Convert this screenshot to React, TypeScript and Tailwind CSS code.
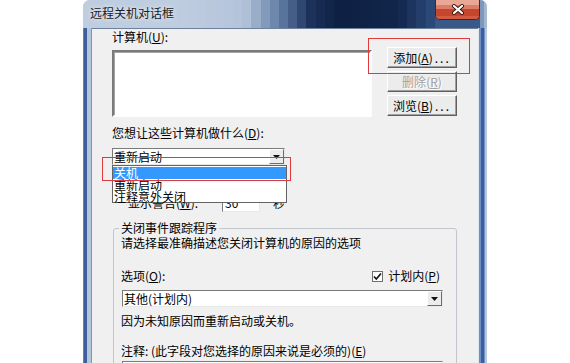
import React from 'react';

const Acc: React.FC<{ k: string }> = ({ k }) => (
  <span>
    (<span className="underline underline-offset-1">{k}</span>)
  </span>
);

const Arrow = () => (
  <div className="w-[15px] h-full flex items-center justify-center bg-[#ececec] border border-t-white border-l-white border-b-[#6d6d6d] border-r-[#6d6d6d]">
    <svg width="7" height="4" viewBox="0 0 7 4">
      <path d="M0 0h7L3.5 4z" fill="#111" />
    </svg>
  </div>
);

const Btn: React.FC<{ children: React.ReactNode; disabled?: boolean }> = ({ children, disabled }) => (
  <div
    className={
      'h-[21px] w-[70px] flex items-center justify-center bg-[#ececec] border border-t-white border-l-white border-b-[#5f5f5f] border-r-[#5f5f5f] shadow-[inset_-1px_-1px_0_#a0a0a0] ' +
      (disabled ? 'text-[#a2a2a2] [text-shadow:1px_1px_0_#ffffff]' : 'text-black')
    }
  >
    {children}
  </div>
);

// glass shading of the title bar, light on the left, deep navy towards the close button
const glass = [
  'bg-[#becce0]',
  'bg-[#bdcbdf]',
  'bg-[#bbcadf]',
  'bg-[#b9c8dd]',
  'bg-[#b8c7dd]',
  'bg-[#b6c6dc]',
  'bg-[#b4c5db]',
  'bg-[#aebfd6]',
  'bg-[#99adc9]',
  'bg-[#839bbb]',
  'bg-[#6d87ad]',
  'bg-[#58739c]',
  'bg-[#455e87]',
  'bg-[#304871]',
  'bg-[#1c325a]',
  'bg-[#172b52]',
  'bg-[#12254a]',
  'bg-[#0e2044]',
  'bg-[#0e2145]',
  'bg-[#0f2246]',
  'bg-[#0f2347]',
  'bg-[#102448]',
  'bg-[#10254a]',
  'bg-[#11254b]',
  'bg-[#142a52]',
  'bg-[#1c345e]',
  'bg-[#233e6b]',
  'bg-[#2b4978]',
];

const CloseBtn = () => (
  <div className="w-[45px] h-[20px] rounded-b-[5px] border border-t-0 border-[#5a1d17] bg-[#cf5a44] flex flex-col overflow-hidden relative">
    <div className="h-[5px] bg-[#eaa796]" />
    <div className="h-[4px] bg-[#dc7d69]" />
    <div className="flex-1 bg-[#c6452d]" />
    <div className="h-[3px] bg-[#d15a40]" />
    <svg className="absolute left-[15px] top-[4px]" width="14" height="11" viewBox="0 0 14 11">
      <path d="M3 2l8 7M11 2l-8 7" stroke="#3b1510" strokeWidth="4" strokeLinecap="round" />
      <path d="M3 2l8 7M11 2l-8 7" stroke="#ffffff" strokeWidth="2.2" strokeLinecap="round" />
    </svg>
  </div>
);

export default function App() {
  return (
    <div className="w-[570px] h-[363px] overflow-hidden bg-white flex font-['Noto_Sans_CJK_SC','Noto_Sans',sans-serif]">
      <div className="ml-[83px] w-[404px] h-[363px] flex flex-col rounded-t-[7px] overflow-hidden bg-[#b4c6dc]">
        {/* title bar */}
        <div className="h-[28px] shrink-0 flex items-stretch bg-[#bfcde0]">
          <div className="pl-[7px] pr-[4px] h-[26px] flex items-center text-[12px] text-[#1b1b1b] [text-shadow:0_0_5px_#ffffff]">
            远程关机对话框
          </div>
          <div className="flex-1 flex">
            {glass.map((c, i) => (
              <div key={i} className={'flex-1 ' + c} />
            ))}
          </div>
          <div className="w-[45px] bg-[#3a5887]">
            <CloseBtn />
          </div>
          <div className="w-[7px] flex">
            <div className="flex-1 bg-[#7d97bd]" />
            <div className="flex-1 bg-[#a4b8d2]" />
          </div>
        </div>

        <div className="flex flex-1 min-h-0">
          {/* left frame */}
          <div className="w-[9px] flex">
            <div className="w-[1px] bg-[#6a7f9e]" />
            <div className="w-[3px] bg-[#3f5f9c]" />
            <div className="w-[4px] bg-[#b4c6dc]" />
            <div className="w-[1px] bg-[#8595ab]" />
          </div>

          {/* client */}
          <div className="w-[386px] bg-[#f0f0f0] border-t border-[#6e819b] pl-[20px] pr-[21px] flex flex-col text-[12px] leading-[14px] text-black">
            <div className="mt-[1px]">
              计算机<Acc k="U" />:
            </div>

            <div className="mt-[3px] flex gap-[15px]">
              <div className="mt-[3px] w-[260px] h-[67px] bg-white border-2 border-t-[#7a7a7a] border-l-[#7a7a7a] border-b-white border-r-[#fdfdfd] shadow-[inset_1px_1px_0_#a5a5a5]" />
              <div className="w-[70px] flex flex-col gap-[3px]">
                <div className="relative">
                  <Btn>
                    添加<Acc k="A" />
                    <span className="tracking-[2px] ml-[2px]">...</span>
                  </Btn>
                  <div className="absolute -left-[19px] -top-[9px] w-[102px] h-[36px] border border-[#e2393d]" />
                </div>
                <Btn disabled>
                  删除<Acc k="R" />
                </Btn>
                <Btn>
                  浏览<Acc k="B" />
                  <span className="tracking-[2px] ml-[2px]">...</span>
                </Btn>
              </div>
            </div>

            <div className="mt-[9px]">
              您想让这些计算机做什么<Acc k="D" />:
            </div>

            <div className="relative mt-[8px] w-[173px] h-[17px] bg-white border border-t-[#7a7a7a] border-l-[#7a7a7a] border-b-[#e8e8e8] border-r-[#e8e8e8] flex">
              <div className="flex-1 pl-[1px] leading-[15px]">重新启动</div>
              <Arrow />
              <div className="absolute left-[-1px] top-[16px] w-[175px] bg-white border border-[#646464] pt-[1px] z-10 leading-[12px]">
                <div className="h-[12px] pl-[1px] bg-[#3399ff] text-white">关机</div>
                <div className="h-[12px] pl-[1px]">重新启动</div>
                <div className="h-[11px] pl-[1px]">注释意外关闭</div>
              </div>
              <div className="absolute -left-[11px] top-[8px] w-[189px] h-[24px] border border-[#e2393d] z-20" />
            </div>

            <div className="mt-[29px] h-[18px] flex items-center pl-[16px]">
              <div className="w-[94px]">
                显示警告<Acc k="W" />:
              </div>
              <div className="w-[38px] h-[18px] bg-white border border-t-[#7a7a7a] border-l-[#7a7a7a] border-b-[#e8e8e8] border-r-[#e8e8e8] pl-[2px] leading-[16px]">
                30
              </div>
              <div className="ml-[13px]">秒</div>
            </div>

            <fieldset className="mt-[9px] ml-[1px] border border-[#c2c7cd] rounded-[3px] pl-[5px] pr-[13px] h-[200px]">
              <legend className="px-[2px] leading-[14px]">关闭事件跟踪程序</legend>
              <div className="pl-[2px] flex flex-col">
                <div className="mt-[1px]">请选择最准确描述您关闭计算机的原因的选项</div>
                <div className="mt-[19px] flex items-center justify-between">
                  <div>
                    选项<Acc k="O" />:
                  </div>
                  <div className="flex items-center mr-[3px]">
                    <div className="w-[11px] h-[11px] bg-white border border-[#6f6f6f] flex items-center justify-center">
                      <svg width="9" height="9" viewBox="0 0 9 9">
                        <path d="M1 4.5l2.3 2.5L8 1.5" stroke="#111" strokeWidth="1.6" fill="none" />
                      </svg>
                    </div>
                    <div className="ml-[5px]">
                      计划内<Acc k="P" />
                    </div>
                  </div>
                </div>
                <div className="mt-[7px] ml-[1px] h-[17px] bg-white border border-t-[#7a7a7a] border-l-[#7a7a7a] border-b-[#e8e8e8] border-r-[#e8e8e8] flex">
                  <div className="flex-1 pl-[1px] leading-[15px]">其他(计划内)</div>
                  <Arrow />
                </div>
                <div className="mt-[7px]">因为未知原因而重新启动或关机。</div>
                <div className="mt-[16px]">
                  注释: (此字段对您选择的原因来说是必须的)<Acc k="E" />
                </div>
                <div className="mt-[3px] ml-[1px] h-[22px] bg-white border border-t-[#7a7a7a] border-l-[#7a7a7a] border-b-[#e8e8e8] border-r-[#e8e8e8]" />
              </div>
            </fieldset>
          </div>

          {/* right frame */}
          <div className="w-[9px] flex">
            <div className="w-[1px] bg-[#dfe6ee]" />
            <div className="w-[2px] bg-[#6f8fc4]" />
            <div className="w-[3px] bg-[#3e5f9e]" />
            <div className="w-[1px] bg-[#6f8fc4]" />
            <div className="w-[2px] bg-[#b9c7d8]" />
          </div>
        </div>
      </div>
    </div>
  );
}
